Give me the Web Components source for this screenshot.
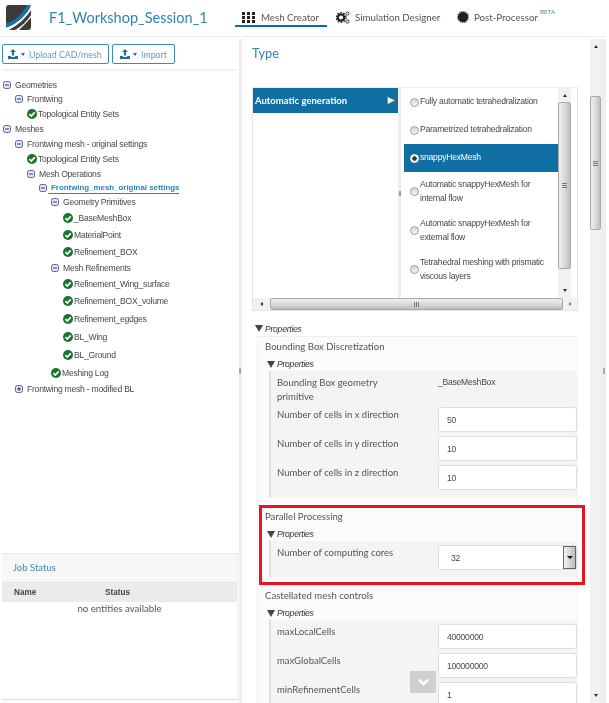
<!DOCTYPE html>
<html>
<head>
<meta charset="utf-8">
<title>F1_Workshop_Session_1</title>
<style>
  html, body { margin: 0; height: 703px; overflow: hidden; background: #fff; }
  body { font-family: "Liberation Sans", sans-serif; color: #555; display: flex; flex-direction: column; filter: blur(0.35px); }
</style>
</head>
<body>
<app-header></app-header>
<main-area></main-area>

<script>
const CHECK = `<svg width="10" height="10" viewBox="0 0 10 10"><circle cx="5" cy="5" r="5" fill="#1a7530"/><path d="M2.4 5.2 4.3 7 7.7 3.3" fill="none" stroke="#fff" stroke-width="1.7"/></svg>`;
const boxIcon = (plus) => `<svg width="8" height="8" viewBox="0 0 8 8"><rect x=".5" y=".5" width="7" height="7" rx="2" fill="#e6e6f4" stroke="#5d5fa0"/><path d="M2 4h4${plus ? "M4 2v4" : ""}" stroke="#34367c"/></svg>`;
const UPLOAD = `<svg width="10" height="10" viewBox="0 0 10 10"><path d="M5 0 8 3H6V6.5H4V3H2Z" fill="#1d6f9c"/><path d="M0 7H3V8H7V7H10V10H0Z" fill="#1d6f9c"/></svg>`;

class AppHeader extends HTMLElement {
  constructor() {
    super();
    this.shadowDOM = this.attachShadow({ mode: "open" });
  }
  connectedCallback() {
    this.shadowDOM.innerHTML = `<style>
      :host { display: flex; align-items: flex-start; height: 36px; margin-right: 3px; border-bottom: 1px solid #eee; flex: none; }
      svg.logo { margin: 5px 0 0 6px; flex: none; }
      h1 { font: 400 14.5px/21px Lato, sans-serif; color: #2f84b0; margin: 7px 0 0 18px; width: 186px; flex: none; white-space: nowrap; }
      nav { display: flex; }
    </style>
    <svg class="logo" width="25" height="25" viewBox="0 0 25 25">
      <rect width="25" height="25" rx="3" fill="#3d3a38"/>
      <path d="M0 22.5C11 19 21 10 25 0V5C20 13 12 20 3 25H0Z" fill="#fff"/>
      <path d="M0 18.5C9 16 17 9 20.5 0H25C21 10 11 19 0 22.5Z" fill="#0f76a8"/>
      <path d="M9 25C15 22 21 16 25 10V12.5C21 17 17 21 13 25Z" fill="#fff"/>
    </svg>
    <h1>F1_Workshop_Session_1</h1>
    <nav>
      <nav-tab active w="92" pad="7" gap="6" label="Mesh Creator">
        <svg width="13" height="11" viewBox="0 0 13 11" fill="#222"><path d="M0 0h3v3H0zM5 0h3v3H5zM10 0h3v3h-3zM0 4h3v3H0zM5 4h3v3H5zM10 4h3v3h-3zM0 8h3v3H0zM5 8h3v3H5zM10 8h3v3h-3z"/></svg>
      </nav-tab>
      <nav-tab w="121" pad="9" gap="5" label="Simulation Designer">
        <svg width="14" height="13" viewBox="0 0 14 13"><circle cx="5" cy="6.5" r="3.2" fill="none" stroke="#222" stroke-width="2.2"/><circle cx="5" cy="6.5" r="4.9" fill="none" stroke="#222" stroke-width="1.4" stroke-dasharray="1.6 1.5"/><circle cx="11.5" cy="2.5" r="1.6" fill="none" stroke="#333"/><circle cx="11.5" cy="10.5" r="1.6" fill="none" stroke="#333"/></svg>
      </nav-tab>
      <nav-tab pad="9" gap="5" label="Post-Processor" beta>
        <svg width="12" height="12" viewBox="0 0 12 12"><circle cx="6" cy="6" r="5.2" fill="#222"/><circle cx="6" cy="6" r="5.8" fill="none" stroke="#222" stroke-dasharray="1 1.2"/></svg>
      </nav-tab>
    </nav>`;
  }
}

class NavTab extends HTMLElement {
  constructor() {
    super();
    this.shadowDOM = this.attachShadow({ mode: "open" });
  }
  connectedCallback() {
    const active = this.hasAttribute("active");
    this.shadowDOM.innerHTML = `<style>
      :host { display: block; flex: none; height: 27px; box-sizing: border-box; width: ${this.getAttribute("w") ? this.getAttribute("w") + "px" : "auto"}; border-bottom: 2px solid ${active ? "#0f6fa3" : "transparent"}; padding: 10px 0 0 ${this.getAttribute("pad")}px; }
      div { display: flex; align-items: center; height: 14px; gap: ${this.getAttribute("gap")}px; font: 400 9.7px/14px Lato, sans-serif; color: #555; white-space: nowrap; }
      ::slotted(svg) { flex: none; }
      sup { font-size: 6.4px; line-height: 8px; color: #4c9c6c; align-self: flex-start; margin: -2px 0 0 -3px; }
    </style>
    <div><slot></slot><span>${this.getAttribute("label")}</span>${this.hasAttribute("beta") ? "<sup>BETA</sup>" : ""}</div>`;
  }
}

class ToolButton extends HTMLElement {
  constructor() {
    super();
    this.shadowDOM = this.attachShadow({ mode: "open" });
  }
  connectedCallback() {
    this.shadowDOM.innerHTML = `<style>
      :host { display: flex; align-items: center; flex: none; box-sizing: border-box; height: 20px; width: ${this.getAttribute("w")}px; padding-left: ${this.getAttribute("pad")}px; gap: 3px; border: 1px solid #3f8cb3; border-radius: 2px; font: 400 8.8px Lato, sans-serif; color: #5f9dbd; white-space: nowrap; }
      i { width: 0; height: 0; border: 2.5px solid transparent; border-top: 3px solid #1d6f9c; border-bottom: 0; margin-right: 1px; }
    </style>${UPLOAD}<i></i><span><slot></slot></span>`;
  }
}

class TreeRow extends HTMLElement {
  constructor() {
    super();
    this.shadowDOM = this.attachShadow({ mode: "open" });
  }
  connectedCallback() {
    const kind = this.getAttribute("kind") || "minus";
    const icon = kind === "check" ? CHECK : boxIcon(kind === "plus");
    const link = this.hasAttribute("link");
    this.shadowDOM.innerHTML = `<style>
      :host { display: flex; align-items: center; height: ${this.getAttribute("h") || 15}px; padding-left: ${this.getAttribute("x")}px; font-size: 8.6px; letter-spacing: -.25px; color: #484848; white-space: nowrap; }
      span { margin-left: ${this.getAttribute("gap") || 4}px; }
      span.link { font-size: 7.9px; letter-spacing: 0; font-weight: 700; color: #2a86b5; border-bottom: 1px solid #2a86b5; line-height: 10px; padding: 0 0 0 3px; margin-left: 1px; }
      svg { flex: none; }
    </style>${icon}<span class="${link ? "link" : ""}"><slot></slot></span>`;
  }
}

class JobStatus extends HTMLElement {
  constructor() {
    super();
    this.shadowDOM = this.attachShadow({ mode: "open" });
  }
  connectedCallback() {
    this.shadowDOM.innerHTML = `<style>
      :host { display: block; flex: none; margin: auto 1px 0 2px; height: 147px; box-sizing: border-box; border-top: 1px solid #e6e6e6; border-bottom: 1px solid #ddd; border-right: 1px solid #eee; }
      header { height: 28px; background: #f7f7f7; border-bottom: 1px solid #e4e4e4; padding-left: 11px; font: 400 9.5px/28px Lato, sans-serif; color: #3d8ab3; }
      .head { display: grid; grid-template-columns: 91px 1fr; height: 19px; padding-left: 12px; background: #ebebeb; font: 700 8.2px/19px "Liberation Sans", sans-serif; color: #444; }
      p { margin: 0; text-align: center; font: 400 9.7px/12px Lato, sans-serif; color: #555; }
    </style>
    <header>Job Status</header>
    <div class="head"><span>Name</span><span>Status</span></div>
    <p>no entities available</p>`;
  }
}

class FakeScroll extends HTMLElement {
  constructor() {
    super();
    this.shadowDOM = this.attachShadow({ mode: "open" });
  }
  connectedCallback() {
    const horizontal = this.getAttribute("dir") === "h";
    const before = this.getAttribute("before");
    const size = this.getAttribute("size");
    const grip = horizontal
      ? `<path d="M.5 0v5M2.5 0v5M4.5 0v5" stroke="#777" fill="none"/>`
      : `<path d="M0 .5h5M0 2.5h5M0 4.5h5" stroke="#777" fill="none"/>`;
    this.shadowDOM.innerHTML = `<style>
      :host { display: flex; flex: none; flex-direction: ${horizontal ? "row" : "column"}; background: #f1f1f1; }
      .arrow { flex: none; ${horizontal ? `width: ${before}px` : `height: ${before}px`}; display: flex; justify-content: center; align-items: ${horizontal ? "center" : "flex-start"}; ${horizontal ? "" : "padding-top: 6px; box-sizing: border-box;"} }
      .thumb { flex: none; display: flex; align-items: center; justify-content: center; box-sizing: border-box; ${horizontal ? `width: ${size}px; height: 100%` : `height: ${size}px; width: 100%`}; border: 1px solid #a9a9a9; border-radius: 2px; background: linear-gradient(${horizontal ? "180deg" : "90deg"}, #efefef, #d9d9d9 55%, #bdbdbd); }
      .down { flex: 1; display: flex; padding: 0 2px; align-items: ${horizontal ? "center" : "flex-end"}; justify-content: ${horizontal ? "flex-end" : "center"}; }
      .down span { display: block; margin: ${this.getAttribute("end") || "0 3px 0 0"}; }
      i { display: block; width: 0; height: 0; border: 2.5px solid transparent; }
      .u { border-bottom: 3px solid #333; border-top: 0; } .d { border-top: 3px solid #333; border-bottom: 0; }
      .l { border-right: 3px solid #333; border-left: 0; } .r { border-left: 3px solid #888; border-right: 0; }
    </style>
    <div class="arrow"><i class="${horizontal ? "l" : "u"}"></i></div>
    <div class="thumb"><svg width="5" height="5">${grip}</svg></div>
    <div class="down"><span><i class="${horizontal ? "r" : "d"}"></i></span></div>`;
  }
}

class RadioItem extends HTMLElement {
  constructor() {
    super();
    this.shadowDOM = this.attachShadow({ mode: "open" });
  }
  connectedCallback() {
    const on = this.hasAttribute("checked");
    this.shadowDOM.innerHTML = `<style>
      :host { display: flex; align-items: center; height: ${this.getAttribute("h") || 28}px; padding-left: 6px; gap: 1px; font-size: 8.6px; letter-spacing: -.25px; line-height: 13.5px; color: ${on ? "#fff" : "#484848"}; background: ${on ? "#0f6fa3" : "transparent"}; }
      b { flex: none; width: 9px; height: 9px; box-sizing: border-box; border-radius: 50%; border: 1px solid ${on ? "#fff" : "#a0a0a0"}; background: ${on ? "radial-gradient(circle, #333 0 2px, #fff 2.4px)" : "linear-gradient(#d4d4d4, #f2f2f2)"}; }
      span { max-width: 128px; }
    </style><b></b><span><slot></slot></span>`;
  }
}

class TypeSelector extends HTMLElement {
  constructor() {
    super();
    this.shadowDOM = this.attachShadow({ mode: "open" });
  }
  connectedCallback() {
    this.shadowDOM.innerHTML = `<style>
      :host { display: block; box-sizing: border-box; width: 326px; height: 224px; margin-left: 10px; border: 1px solid #e4e4e4; border-top-color: #eee; }
      .top { display: flex; height: 210px; }
      .cat { flex: none; width: 145px; }
      .cat div { display: flex; justify-content: space-between; align-items: center; height: 25px; padding: 0 2px; background: #0f6fa3; color: #fff; font: 700 9.5px Lato, sans-serif; box-sizing: border-box; }
      .split { flex: none; width: 3px; background: #eee; display: flex; align-items: center; }
      .split i { display: block; width: 2px; height: 5px; background: #999; margin: 0 auto; }
      .list { flex: none; width: 154px; margin-left: 3px; }
      fake-scroll[dir="v"] { width: 13px; }
      fake-scroll[dir="h"] { height: 12px; }
    </style>
    <div class="top">
      <div class="cat"><div>Automatic generation<svg width="9" height="9" viewBox="0 0 9 9"><path d="M.5 .8 8 4.5 .5 8.2Z" fill="#fff" stroke="#888" stroke-width=".8"/></svg></div></div>
      <div class="split"><i></i></div>
      <div class="list"><slot></slot></div>
      <fake-scroll dir="v" before="14" size="167" end="0 0 6px"></fake-scroll>
    </div>
    <fake-scroll dir="h" before="17" size="293"></fake-scroll>`;
  }
}

class PropPanel extends HTMLElement {
  constructor() {
    super();
    this.shadowDOM = this.attachShadow({ mode: "open" });
  }
  connectedCallback() {
    this.shadowDOM.innerHTML = `<style>
      :host { display: block; margin-left: 1px; background: #fbfbfb; box-shadow: inset 1px 1px 0 #efefef; padding-bottom: ${this.getAttribute("after") || 9}px; }
      h3 { margin: 0; height: 20px; padding-left: 8px; font: 400 9.6px/21px Lato, sans-serif; color: #555; }
      .rows { margin-left: 12px; padding: 4px 0 3px 6px; background: #f4f4f4; border-left: 2px solid #dfdfdf; }
    </style>
    <h3>${this.getAttribute("title")}</h3>
    <props-label indent="10"></props-label>
    <div class="rows"><slot></slot></div>`;
  }
}

class PropsLabel extends HTMLElement {
  constructor() {
    super();
    this.shadowDOM = this.attachShadow({ mode: "open" });
  }
  connectedCallback() {
    const nudge = this.hasAttribute("indent") ? 1 : 0;
    this.shadowDOM.innerHTML = `<style>
      :host { display: flex; align-items: center; height: ${15 - nudge}px; margin-top: ${nudge}px; padding-left: ${this.getAttribute("indent") || 0}px; gap: 2px; font: italic 8.6px "Liberation Sans", sans-serif; letter-spacing: -.25px; color: #333; }
      i { width: 0; height: 0; border: 4px solid transparent; border-top: 7px solid #444; border-bottom: 0; }
    </style><i></i><span>Properties</span>`;
  }
}

class PropRow extends HTMLElement {
  constructor() {
    super();
    this.shadowDOM = this.attachShadow({ mode: "open" });
  }
  connectedCallback() {
    const text = this.getAttribute("text");
    const value = this.getAttribute("value");
    const select = this.hasAttribute("select");
    this.shadowDOM.innerHTML = `<style>
      :host { display: grid; grid-template-columns: 161px 139px; align-items: start; height: ${this.getAttribute("h") || 29}px; }
      label { font: 400 9.5px/13.5px Lato, sans-serif; color: #555; max-width: 126px; padding-top: 1px; }
      .plain { font-size: 8.6px; letter-spacing: -.25px; line-height: 14px; color: #484848; }
      .input { box-sizing: border-box; height: 25px; display: flex; align-items: center; justify-content: space-between; padding-left: ${select ? 12 : 8}px; background: #fff; border: 1px solid #ddd; border-radius: 3px; font-size: 8.6px; letter-spacing: -.25px; color: #484848; }
      .btn { width: 13px; height: 23px; display: flex; align-items: center; justify-content: center; background: linear-gradient(90deg, #f2f2f2, #bdbdbd); border: 1px solid #666; box-sizing: border-box; }
      .btn i { width: 0; height: 0; border: 3px solid transparent; border-top: 3px solid #111; border-bottom: 0; }
    </style>
    <label>${text}</label>
    ${value === null ? "" : this.hasAttribute("plain")
      ? `<div class="plain">${value}</div>`
      : `<div class="input"><span>${value}</span>${select ? '<div class="btn"><i></i></div>' : ""}</div>`}`;
  }
}

class MainArea extends HTMLElement {
  constructor() {
    super();
    this.shadowDOM = this.attachShadow({ mode: "open" });
  }
  connectedCallback() {
    this.shadowDOM.innerHTML = `<style>
      :host { display: flex; flex: 1; min-height: 0; padding-top: 2px; position: relative; }
      .left { flex: none; width: 239px; display: flex; flex-direction: column; padding-bottom: 3px; box-sizing: border-box; }
      .tools { display: flex; gap: 3px; height: 20px; margin: 5px 3px 0 2px; flex: none; border-bottom: 2px solid #f2f2f2; padding-bottom: 5px; }
      .tree { padding-top: 7px; }
      .gutter { flex: none; width: 3px; background: #eee; display: flex; align-items: center; }
      .gutter i { display: block; width: 2px; height: 6px; background: #aaa; }
      .right { flex: none; width: 348px; overflow: hidden; position: relative; }
      h2 { margin: 3px 0 0 10px; height: 23px; font: 400 12.8px/23px Lato, sans-serif; color: #2f84b0; }
      .body { margin-top: 22px; }
      .outer { margin: 10px 0 0 13px; width: 323px; }
      .frame { margin: 0 0 0 1px; }
      .more { position: absolute; left: 168px; top: 632px; width: 26px; height: 22px; background: #cfcfcf; display: flex; align-items: center; justify-content: center; }
      .red { position: absolute; left: 17px; top: 466px; width: 326px; height: 80px; border: 3px solid #e8141f; box-sizing: border-box; }
      fake-scroll.page { width: 11px; }
      .edge { width: 5px; justify-content: center; }
    </style>
    <section class="left">
      <div class="tools">
        <tool-button w="107" pad="5">Upload CAD/mesh</tool-button>
        <tool-button w="63" pad="7">Import</tool-button>
      </div>
      <div class="tree">
        <tree-row x="3" h="14">Geometries</tree-row>
        <tree-row x="15" h="14.5">Frontwing</tree-row>
        <tree-row x="27" kind="check" h="15.5" gap="1">Topological Entity Sets</tree-row>
        <tree-row x="3" h="14.5">Meshes</tree-row>
        <tree-row x="15" h="14.5">Frontwing mesh - original settings</tree-row>
        <tree-row x="27" kind="check" h="16" gap="1">Topological Entity Sets</tree-row>
        <tree-row x="27" h="14.5">Mesh Operations</tree-row>
        <tree-row x="39" h="13" link>Frontwing_mesh_original settings</tree-row>
        <tree-row x="51" h="14.5">Geometry Primitives</tree-row>
        <tree-row x="63" kind="check" h="17" gap="1">_BaseMeshBox</tree-row>
        <tree-row x="63" kind="check" h="17.5" gap="1">MaterialPoint</tree-row>
        <tree-row x="63" kind="check" h="16.5" gap="1">Refinement_BOX</tree-row>
        <tree-row x="51" h="16">Mesh Refinements</tree-row>
        <tree-row x="63" kind="check" h="16.5" gap="1">Refinement_Wing_surface</tree-row>
        <tree-row x="63" kind="check" h="17.5" gap="1">Refinement_BOX_volume</tree-row>
        <tree-row x="63" kind="check" h="18" gap="1">Refinement_egdges</tree-row>
        <tree-row x="63" kind="check" h="18" gap="1">BL_Wing</tree-row>
        <tree-row x="63" kind="check" h="18" gap="1">BL_Ground</tree-row>
        <tree-row x="51" kind="check" h="17" gap="1">Meshing Log</tree-row>
        <tree-row x="15" kind="plus" h="16">Frontwing mesh - modified BL</tree-row>
      </div>
      <job-status></job-status>
    </section>
    <div class="gutter"><i></i></div>
    <section class="right">
      <h2>Type</h2>
      <div class="body">
        <type-selector>
          <radio-item>Fully automatic tetrahedralization</radio-item>
          <radio-item>Parametrized tetrahedralization</radio-item>
          <radio-item checked>snappyHexMesh</radio-item>
          <radio-item h="39">Automatic snappyHexMesh for internal flow</radio-item>
          <radio-item h="39">Automatic snappyHexMesh for external flow</radio-item>
          <radio-item h="39">Tetrahedral meshing with prismatic viscous layers</radio-item>
        </type-selector>
      </div>
      <div class="outer">
        <props-label></props-label>
        <div class="frame">
          <prop-panel title="Bounding Box Discretization">
            <prop-row h="32" text="Bounding Box geometry primitive" value="_BaseMeshBox" plain></prop-row>
            <prop-row text="Number of cells in x direction" value="50"></prop-row>
            <prop-row text="Number of cells in y direction" value="10"></prop-row>
            <prop-row text="Number of cells in z direction" value="10"></prop-row>
          </prop-panel>
          <prop-panel title="Parallel Processing" after="8">
            <prop-row text="Number of computing cores" value="32" select></prop-row>
          </prop-panel>
          <prop-panel title="Castellated mesh controls">
            <prop-row text="maxLocalCells" value="40000000"></prop-row>
            <prop-row text="maxGlobalCells" value="100000000"></prop-row>
            <prop-row text="minRefinementCells" value="1"></prop-row>
          </prop-panel>
        </div>
      </div>
      <div class="red"></div>
      <div class="more"><svg width="13" height="8" viewBox="0 0 13 8"><path d="M2 1.5 6.5 6 11 1.5" fill="none" stroke="#fff" stroke-width="2.4"/></svg></div>
    </section>
    <fake-scroll class="page" dir="v" before="57" size="134" end="0 0 6px"></fake-scroll>
    <div class="gutter edge"><i></i></div>`;
  }
}

customElements.define("app-header", AppHeader);
customElements.define("nav-tab", NavTab);
customElements.define("tool-button", ToolButton);
customElements.define("tree-row", TreeRow);
customElements.define("job-status", JobStatus);
customElements.define("fake-scroll", FakeScroll);
customElements.define("radio-item", RadioItem);
customElements.define("type-selector", TypeSelector);
customElements.define("props-label", PropsLabel);
customElements.define("prop-panel", PropPanel);
customElements.define("prop-row", PropRow);
customElements.define("main-area", MainArea);
</script>
</body>
</html>
